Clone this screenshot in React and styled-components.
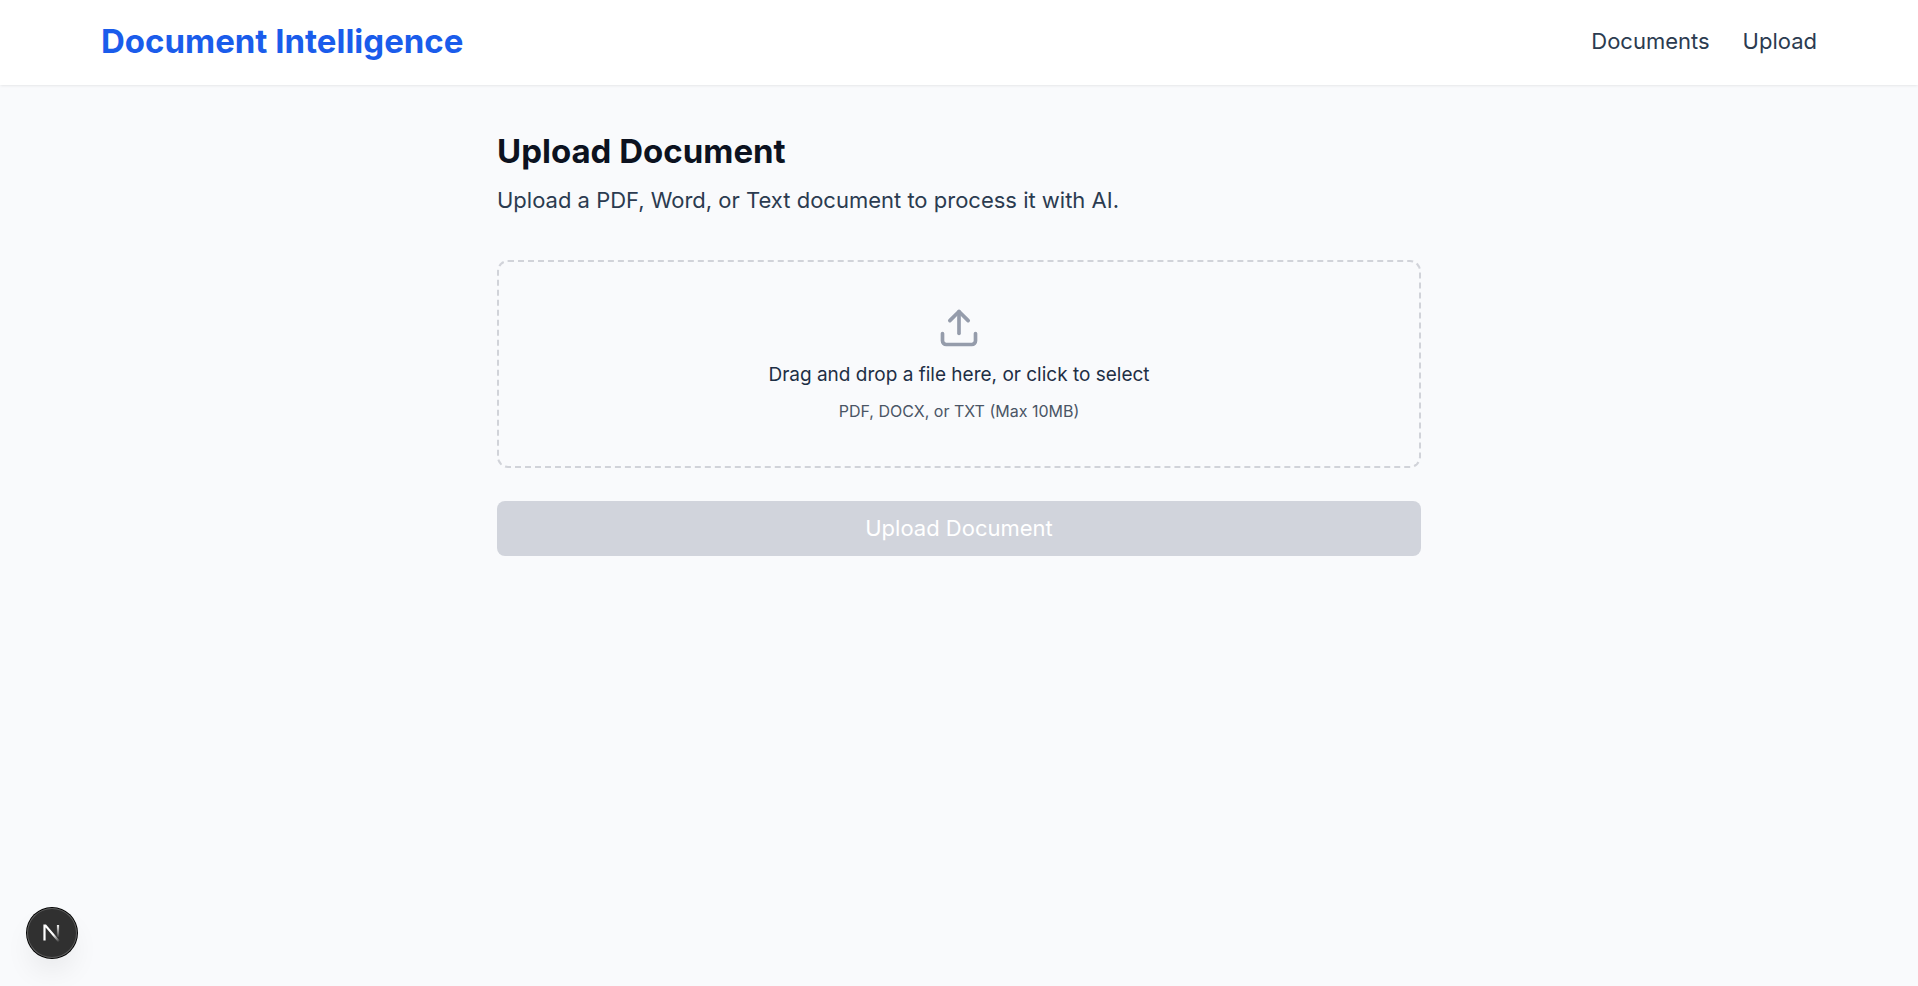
import React from 'react';
import styled, { createGlobalStyle } from 'styled-components';
import { Upload } from 'lucide-react';

const GlobalStyle = createGlobalStyle`
  *, *::before, *::after { box-sizing: border-box; }
  body {
    margin: 0;
    min-height: 100vh;
    background: #f9fafc;
    color: #1e2f45;
    font-family: Inter, "Liberation Sans", sans-serif;
    font-size: 22px;
    line-height: 33px;
  }
  h1, p { margin: 0; }
`;

const Header = styled.header`
  background: #ffffff;
  box-shadow: 0 1px 3px rgba(0, 0, 0, 0.06), 0 1px 2px -1px rgba(0, 0, 0, 0.06);
`;

const HeaderInner = styled.div`
  display: flex;
  align-items: center;
  justify-content: space-between;
  max-width: 1760px;
  margin: 0 auto;
  padding: 19px 22px 22px;
`;

const Brand = styled.a`
  color: #1a5ceb;
  font-size: 33px;
  font-weight: 700;
  line-height: 44px;
  text-decoration: none;
`;

const Nav = styled.nav`
  display: flex;
  gap: 33px;
`;

const NavLink = styled.a`
  color: #2b3b50;
  text-decoration: none;

  &:hover { color: #1a5ceb; }
`;

const Main = styled.main`
  display: flex;
  flex-direction: column;
  gap: 33px;
  width: 100%;
  max-width: 924px;
  margin: 0 auto;
  padding: 44px 0;
`;

const Intro = styled.div`
  display: flex;
  flex-direction: column;
  gap: 11px;
  padding-bottom: 10px;
`;

const Title = styled.h1`
  color: #0c1220;
  font-size: 33px;
  font-weight: 700;
  line-height: 44px;
`;

const Lead = styled.p`
  color: #2b3b50;
`;

const Form = styled.form`
  display: flex;
  flex-direction: column;
  gap: 33px;
`;

const DropZone = styled.label`
  display: flex;
  flex-direction: column;
  align-items: center;
  gap: 11px;
  padding: 44px;
  border: 2px dashed #d1d3d9;
  border-radius: 11px;
  text-align: center;
  cursor: pointer;
`;

const UploadIcon = styled(Upload)`
  width: 44px;
  height: 44px;
  color: #959cab;
`;

const DropText = styled.span`
  font-size: 19px;
  line-height: 28px;
`;

const DropHint = styled.span`
  color: #4a5565;
  font-size: 16px;
  line-height: 22px;
`;

const SubmitButton = styled.button`
  padding: 11px 22px;
  border: 0;
  border-radius: 8px;
  background: #1a5ceb;
  color: #ffffff;
  font: inherit;
  cursor: pointer;

  &:disabled {
    background: #d1d4dc;
    cursor: not-allowed;
  }
`;

const DevBadge = styled.button`
  position: fixed;
  left: 27px;
  bottom: 28px;
  display: grid;
  place-items: center;
  width: 50px;
  height: 50px;
  padding: 0;
  border: 0;
  border-radius: 50%;
  background: #303030;
  box-shadow: 0 0 0 1px #000000, inset 0 0 0 1px #5c5c5c, 0 16px 32px -8px rgba(0, 0, 0, 0.12);
`;

const NextMark = () => (
  <svg width="20" height="20" viewBox="0 0 20 20" fill="none" aria-hidden="true">
    <defs>
      <linearGradient id="stem" x1="0" y1="1" x2="0" y2="15" gradientUnits="userSpaceOnUse">
        <stop stopColor="#fff" />
        <stop offset="1" stopColor="#fff" stopOpacity="0" />
      </linearGradient>
      <linearGradient id="diagonal" x1="11" y1="12" x2="17" y2="19" gradientUnits="userSpaceOnUse">
        <stop stopColor="#fff" />
        <stop offset="1" stopColor="#fff" stopOpacity="0" />
      </linearGradient>
    </defs>
    <path d="M2.5 17.5V2.5H3.5L17 18.5" stroke="url(#diagonal)" strokeWidth="2.2" />
    <path d="M16 2V14" stroke="url(#stem)" strokeWidth="2.2" />
  </svg>
);

const HiddenFile = styled.input`
  position: absolute;
  width: 1px;
  height: 1px;
  opacity: 0;
`;

export default function App() {
  return (
    <>
      <GlobalStyle />
      <Header>
        <HeaderInner>
          <Brand href="/">Document Intelligence</Brand>
          <Nav>
            <NavLink href="/documents">Documents</NavLink>
            <NavLink href="/upload">Upload</NavLink>
          </Nav>
        </HeaderInner>
      </Header>
      <Main>
        <Intro>
          <Title>Upload Document</Title>
          <Lead>Upload a PDF, Word, or Text document to process it with AI.</Lead>
        </Intro>
        <Form>
          <DropZone htmlFor="file">
            <UploadIcon aria-hidden="true" />
            <DropText>Drag and drop a file here, or click to select</DropText>
            <DropHint>PDF, DOCX, or TXT (Max 10MB)</DropHint>
            <HiddenFile id="file" type="file" accept=".pdf,.docx,.txt" />
          </DropZone>
          <SubmitButton type="submit" disabled>Upload Document</SubmitButton>
        </Form>
      </Main>
      <DevBadge type="button" aria-label="Open developer tools">
        <NextMark />
      </DevBadge>
    </>
  );
}
